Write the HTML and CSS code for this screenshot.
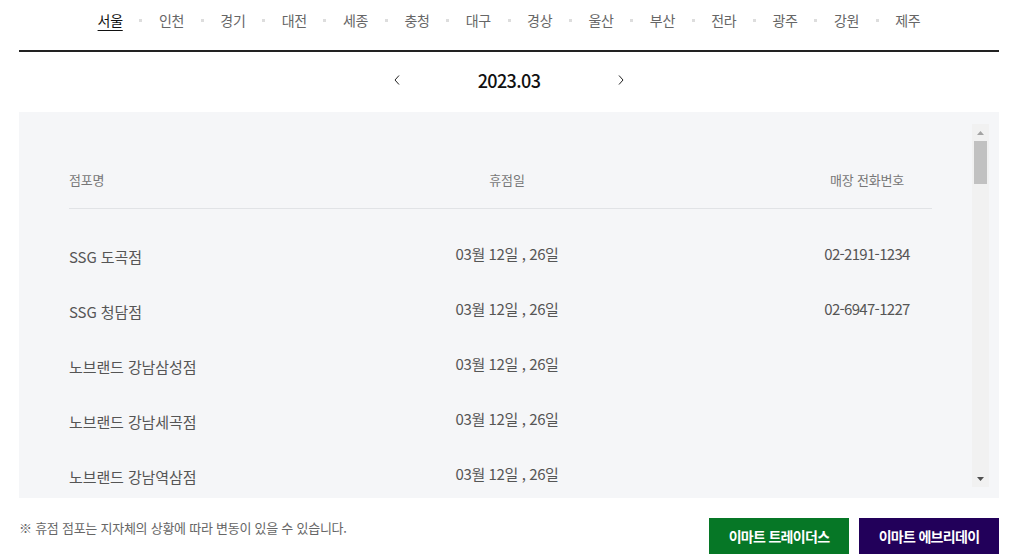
FILE: index.html
```html
<!DOCTYPE html>
<html lang="ko">
<head>
<meta charset="utf-8">
<title>휴점일 안내</title>
<link rel="stylesheet" href="styles.css">
</head>
<body>
<div class="wrap">
  <ul class="regions">
    <li class="region active">서울</li>
    <li class="region">인천</li>
    <li class="region">경기</li>
    <li class="region">대전</li>
    <li class="region">세종</li>
    <li class="region">충청</li>
    <li class="region">대구</li>
    <li class="region">경상</li>
    <li class="region">울산</li>
    <li class="region">부산</li>
    <li class="region">전라</li>
    <li class="region">광주</li>
    <li class="region">강원</li>
    <li class="region">제주</li>
  </ul>

  <div class="month">
    <button class="month-btn" aria-label="이전 달">
      <svg width="6" height="10" viewBox="0 0 6 10"><polyline points="5,0.5 1,5 5,9.5" fill="none" stroke="#222" stroke-width="1"/></svg>
    </button>
    <span class="month-label">2023.03</span>
    <button class="month-btn" aria-label="다음 달">
      <svg width="6" height="10" viewBox="0 0 6 10"><polyline points="1,0.5 5,5 1,9.5" fill="none" stroke="#222" stroke-width="1"/></svg>
    </button>
  </div>

  <div class="board">
    <div class="list">
      <div class="row head">
        <div class="c-name">점포명</div>
        <div class="c-date">휴점일</div>
        <div class="c-tel">매장 전화번호</div>
      </div>
      <div class="body">
        <div class="row">
          <div class="c-name">SSG 도곡점</div>
          <div class="c-date">03월 12일 , 26일</div>
          <div class="c-tel">02-2191-1234</div>
        </div>
        <div class="row">
          <div class="c-name">SSG 청담점</div>
          <div class="c-date">03월 12일 , 26일</div>
          <div class="c-tel">02-6947-1227</div>
        </div>
        <div class="row">
          <div class="c-name">노브랜드 강남삼성점</div>
          <div class="c-date">03월 12일 , 26일</div>
          <div class="c-tel"></div>
        </div>
        <div class="row">
          <div class="c-name">노브랜드 강남세곡점</div>
          <div class="c-date">03월 12일 , 26일</div>
          <div class="c-tel"></div>
        </div>
        <div class="row">
          <div class="c-name">노브랜드 강남역삼점</div>
          <div class="c-date">03월 12일 , 26일</div>
          <div class="c-tel"></div>
        </div>
      </div>
    </div>
    <div class="scrollbar">
      <div class="sb-btn">
        <svg width="7" height="4" viewBox="0 0 7 4"><polygon points="3.5,0 7,4 0,4" fill="#a3a3a3"/></svg>
      </div>
      <div class="sb-track">
        <div class="sb-thumb"></div>
      </div>
      <div class="sb-btn">
        <svg width="7" height="4" viewBox="0 0 7 4"><polygon points="0,0 7,0 3.5,4" fill="#505050"/></svg>
      </div>
    </div>
  </div>

  <div class="foot">
    <p class="note">※ 휴점 점포는 지자체의 상황에 따라 변동이 있을 수 있습니다.</p>
    <div class="links">
      <a class="link-btn traders" href="#">이마트 트레이더스</a>
      <a class="link-btn everyday" href="#">이마트 에브리데이</a>
    </div>
  </div>
</div>
</body>
</html>
```

FILE: styles.css
```css
* { box-sizing: border-box; }

html, body {
  margin: 0;
  padding: 0;
  background: #fff;
}

body {
  font-family: "Noto Sans CJK KR", "Noto Sans KR", "Noto Sans", sans-serif;
  color: #555;
}

.wrap {
  width: 980px;
  margin-left: 19px;
}

/* region tabs */
.regions {
  list-style: none;
  margin: 0;
  padding: 10px 0 20px;
  display: flex;
  justify-content: center;
  border-bottom: 2px solid #222;
}

.region {
  position: relative;
  font-size: 14px;
  line-height: 20px;
  color: #666;
  padding: 0 16.6px;
  letter-spacing: -0.3px;
}

.region + .region {
  margin-left: 3px;
}

.region + .region::before {
  content: "";
  position: absolute;
  left: -3px;
  top: 9px;
  width: 3px;
  height: 3px;
  background: #ddd;
}

.region.active {
  color: #111;
  text-decoration: underline;
  text-underline-offset: 4px;
  text-decoration-thickness: 1px;
}

/* month navigation */
.month {
  display: flex;
  justify-content: center;
  align-items: center;
  padding: 16px 0 0;
  margin-bottom: 20px;
  height: 40px;
}

.month-btn {
  border: 0;
  background: none;
  padding: 0;
  width: 10px;
  height: 24px;
  display: flex;
  align-items: center;
  justify-content: center;
  cursor: pointer;
}

.month-label {
  font-size: 18px;
  line-height: 24px;
  font-weight: 500;
  color: #111;
  letter-spacing: -0.6px;
  padding: 0 75.5px;
}

/* board */
.board {
  background: #f5f6f8;
  padding: 12px 10px 11px 0;
  display: flex;
  height: 386px;
}

.list {
  flex: 1;
  overflow: hidden;
  padding: 0 40px 0 50px;
}

.row {
  display: grid;
  grid-template-columns: 338px 200px 1fr;
  align-items: center;
  height: 55px;
  font-size: 15px;
  color: #555;
}

.row .c-name {
  padding-top: 5px;
  letter-spacing: -0.1px;
}

.c-date {
  text-align: center;
  letter-spacing: -0.4px;
}

.c-tel {
  justify-self: end;
  width: 130px;
  text-align: center;
  letter-spacing: -0.7px;
}

.row.head {
  height: auto;
  padding: 44px 0 16px;
  line-height: 24px;
  font-size: 13px;
  color: #777;
  border-bottom: 1px solid #e1e3e6;
}

.row.head > div {
  letter-spacing: -0.2px;
}

.row.head .c-name {
  padding-top: 0;
}

.body {
  padding-top: 17px;
}

/* fake scrollbar */
.scrollbar {
  width: 17px;
  display: flex;
  flex-direction: column;
  background: #f1f1f1;
}

.sb-btn {
  height: 17px;
  display: flex;
  align-items: center;
  justify-content: center;
}

.sb-track {
  flex: 1;
  padding: 0 2px;
}

.sb-thumb {
  height: 43px;
  background: #c1c1c1;
}

/* footer */
.foot {
  display: flex;
  justify-content: space-between;
  align-items: flex-start;
  margin-top: 20px;
}

.note {
  margin: 0;
  font-size: 13px;
  line-height: 20px;
  color: #666;
  letter-spacing: -0.25px;
}

.links {
  display: flex;
  gap: 10px;
}

.link-btn {
  width: 140px;
  height: 36px;
  display: flex;
  align-items: center;
  justify-content: center;
  color: #fff;
  font-size: 14px;
  font-weight: 700;
  text-decoration: none;
  letter-spacing: -0.7px;
}

.traders { background: #067726; }
.everyday { background: #22005a; }
```
